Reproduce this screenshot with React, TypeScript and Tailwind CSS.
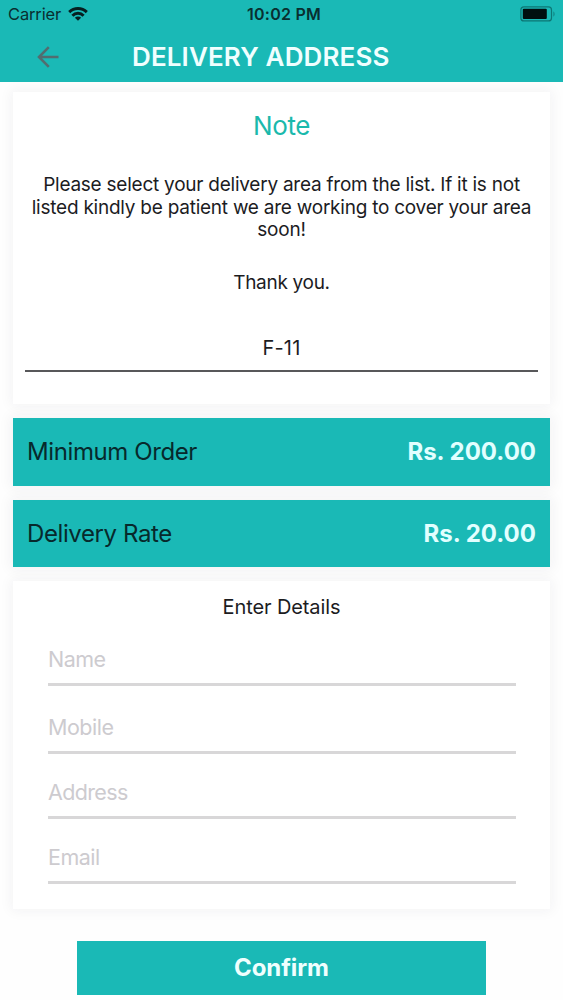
import clsx from "clsx"

const rates = [
  { label: "Minimum Order", value: "Rs. 200.00" },
  { label: "Delivery Rate", value: "Rs. 20.00" },
]

const fields = [
  { label: "Name", height: "h-[60px]", tracking: "tracking-[-0.5px]" },
  { label: "Mobile", height: "h-[68px]", tracking: "tracking-[-0.5px]" },
  { label: "Address", height: "h-[65px]", tracking: "tracking-[-0.65px]" },
  { label: "Email", height: "h-[65px]", tracking: "tracking-[-0.5px]" },
]

function WifiIcon() {
  return (
    <svg width="20" height="14" viewBox="0 0 20 14" fill="none" stroke="#061f20" strokeWidth="2.9">
      <path d="M1.2 5.1A12.6 12.6 0 0 1 18.8 5.1" />
      <path d="M4.4 8.7A7.7 7.7 0 0 1 15.6 8.7" />
      <path d="M6.9 10.7A4.4 4.4 0 0 1 13.1 10.7L10 13.8Z" fill="#061f20" stroke="none" />
    </svg>
  )
}

function BatteryIcon() {
  return (
    <svg width="36" height="16" viewBox="0 0 36 16" fill="none">
      <rect x="0.9" y="0.9" width="30.6" height="14" rx="3" stroke="#0d7775" strokeWidth="1.2" />
      <rect x="2.8" y="2.8" width="24" height="10.2" rx="1" fill="#000f10" />
      <path d="M33.5 5.4c1.3.6 1.3 4.4 0 5Z" fill="#0d7775" />
    </svg>
  )
}

export default function App() {
  return (
    <div className="flex h-[1000px] w-[563px] flex-col overflow-hidden bg-[#fefefe] font-['Inter',sans-serif] whitespace-nowrap text-[#1c1c1f]">
      {/* Header */}
      <header className="relative z-10 h-[82px] shrink-0 bg-[#1ab9b6]">
        <div className="grid h-7 grid-cols-3 items-center pr-[7px] pl-2 text-[#092f30]">
          <div className="flex items-center gap-[7px]">
            <span className="text-[16.5px] tracking-[-0.15px]">Carrier</span>
            <WifiIcon />
          </div>
          <span className="pl-1 text-center text-base font-semibold tracking-[0.25px]">10:02 PM</span>
          <div className="flex justify-end">
            <BatteryIcon />
          </div>
        </div>
        <div className="flex h-[58px] items-center pl-[37px]">
          <svg width="22" height="22" viewBox="0 0 22 22" fill="none" stroke="#526d70" strokeWidth="2.6">
            <path d="M21.5 11H2M11.8 1.2L2 11l9.800 9.800" />
          </svg>
          <h1 className="mb-px ml-[73px] text-[26px] font-semibold tracking-[0.13px] text-[#f0ffff]">DELIVERY ADDRESS</h1>
        </div>
      </header>

      <main className="flex flex-col gap-[14px] px-[13px] pt-[10px]">
        {/* Note */}
        <section className="flex h-[312px] flex-col items-center bg-white px-3 shadow-[0_0_12px_2px_rgba(40,30,60,0.05)]">
          <h2 className="mt-[18px] text-[26px] leading-8 tracking-[-0.4px] text-[#1ab9ac]">Note</h2>
          <p className="mt-8 text-center text-[19px] leading-[22.7px] tracking-[-0.24px]">
            Please select your delivery area from the list. If it is not
            <br />
            listed kindly be patient we are working to cover your area
            <br />
            soon!
          </p>
          <p className="mt-[30px] text-[19px] leading-[22px] tracking-[-0.3px]">Thank you.</p>
          <div className="mt-[38px] h-[40px] w-full border-b-2 border-[#58585a] pt-[3px] text-center text-[20px] leading-[26px] tracking-[0.2px]">
            F-11
          </div>
        </section>

        {/* Rates */}
        {rates.map((rate) => (
          <section
            key={rate.label}
            className="flex h-[67.500px] items-center justify-between bg-[#1ab9b6] px-[14px] pt-px text-[24px] shadow-[0_0_12px_3px_rgba(40,30,60,0.05)]"
          >
            <span className="tracking-[-0.4px] text-[#07292c]">{rate.label}</span>
            <span className="font-bold text-[#e2ffff]">{rate.value}</span>
          </section>
        ))}

        {/* Details form */}
        <section className="h-[328px] bg-white px-[35px] pt-3 shadow-[0_0_12px_2px_rgba(40,30,60,0.05)]">
          <h3 className="text-center text-[20px] leading-7 tracking-[-0.1px]">Enter Details</h3>
          <div className="mt-[5px]">
            {fields.map((field) => (
              <div
                key={field.label}
                className={clsx("flex w-[468px] items-end border-b-[3px] border-[#d8d7d8] pb-[10px]", field.height)}
              >
                <span className={clsx("text-[21.5px] leading-7 text-[#cdcbcf]", field.tracking)}>{field.label}</span>
              </div>
            ))}
          </div>
        </section>
      </main>

      <button className="mt-8 ml-[77px] h-[54px] w-[409px] bg-[#1ab9b6] text-[24px] font-bold tracking-[-0.1px] text-[#effffe]">
        Confirm
      </button>
    </div>
  )
}
